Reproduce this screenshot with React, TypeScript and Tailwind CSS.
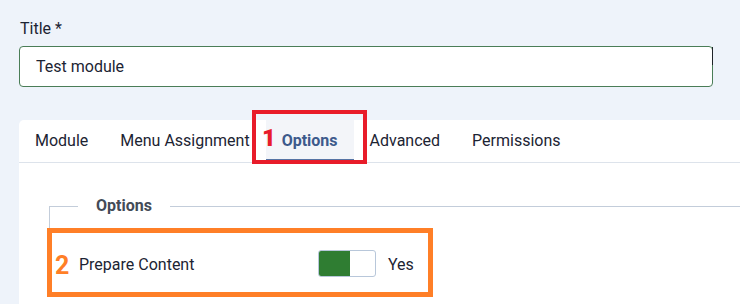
import React from "react";

const tabs = ["Module", "Menu Assignment", "Options", "Advanced", "Permissions"];

export default function App() {
  const active = "Options";

  return (
    <div className="relative min-h-screen overflow-hidden bg-[#eef3fa] pl-[19px] pt-[17px] font-['Roboto','Liberation_Sans',sans-serif] text-[16px] text-[#1c2433]">
      {/* Title field */}
      <label className="block h-6 pl-px leading-6">Title *</label>
      <div className="relative mt-[5px] w-[694px]">
        <input
          readOnly
          value="Test module"
          className="block h-[41px] w-full rounded-[4px] border border-[#4a7d57] bg-white pl-4 text-[16px] text-[#1c2433] outline-none"
        />
        <span className="absolute right-0 top-[1px] h-[18px] w-px bg-[#1f2328]" />
      </div>

      {/* Card with tabs */}
      <div className="mt-[33px] rounded-tl-[5px] bg-white">
        <div className="flex h-[43px] border-b border-[#dde3eb]">
          {tabs.map((t) =>
            t === active ? (
              <div
                key={t}
                className="flex h-[42px] items-center bg-[#f3f5f9] px-4 font-bold text-[#3d5a8c] shadow-[inset_0_-3px_0_#5674a5]"
              >
                {t}
              </div>
            ) : (
              <div key={t} className="flex h-[42px] items-center px-4">
                {t}
              </div>
            )
          )}
        </div>

        <div className="pl-[30px] pt-[31px] pb-10">
          <fieldset className="border-l border-t border-[#c3cdda] pl-[28px]">
            <legend className="px-[18px] font-bold leading-6 text-[#434b57]">Options</legend>
            <div className="mt-[32px] flex h-[27px] items-center">
              <span className="w-[240px] pl-[1px] pt-[3px]">Prepare Content</span>
              <div className="flex h-[27px] w-[58px] overflow-hidden rounded-[3px] border border-[#b8c7da]">
                <div className="h-full w-[31px] bg-[#2f7d32]" />
              </div>
              <span className="ml-3 pt-[2px]">Yes</span>
            </div>
          </fieldset>
        </div>
      </div>

      {/* Annotations */}
      <div className="pointer-events-none absolute left-[252px] top-[110px] h-[54px] w-[115px] border-4 border-[#e81c2a]" />
      <span className="pointer-events-none absolute left-[262px] top-[123px] text-[24px] font-black leading-[30px] text-[#e81c2a]">
        1
      </span>
      <div className="pointer-events-none absolute left-[47px] top-[228px] h-[69px] w-[386px] border-[5px] border-[#ff7f27]" />
      <span className="pointer-events-none absolute left-[55px] top-[250px] text-[25px] font-bold leading-8 text-[#ff7f27]">
        2
      </span>
    </div>
  );
}
